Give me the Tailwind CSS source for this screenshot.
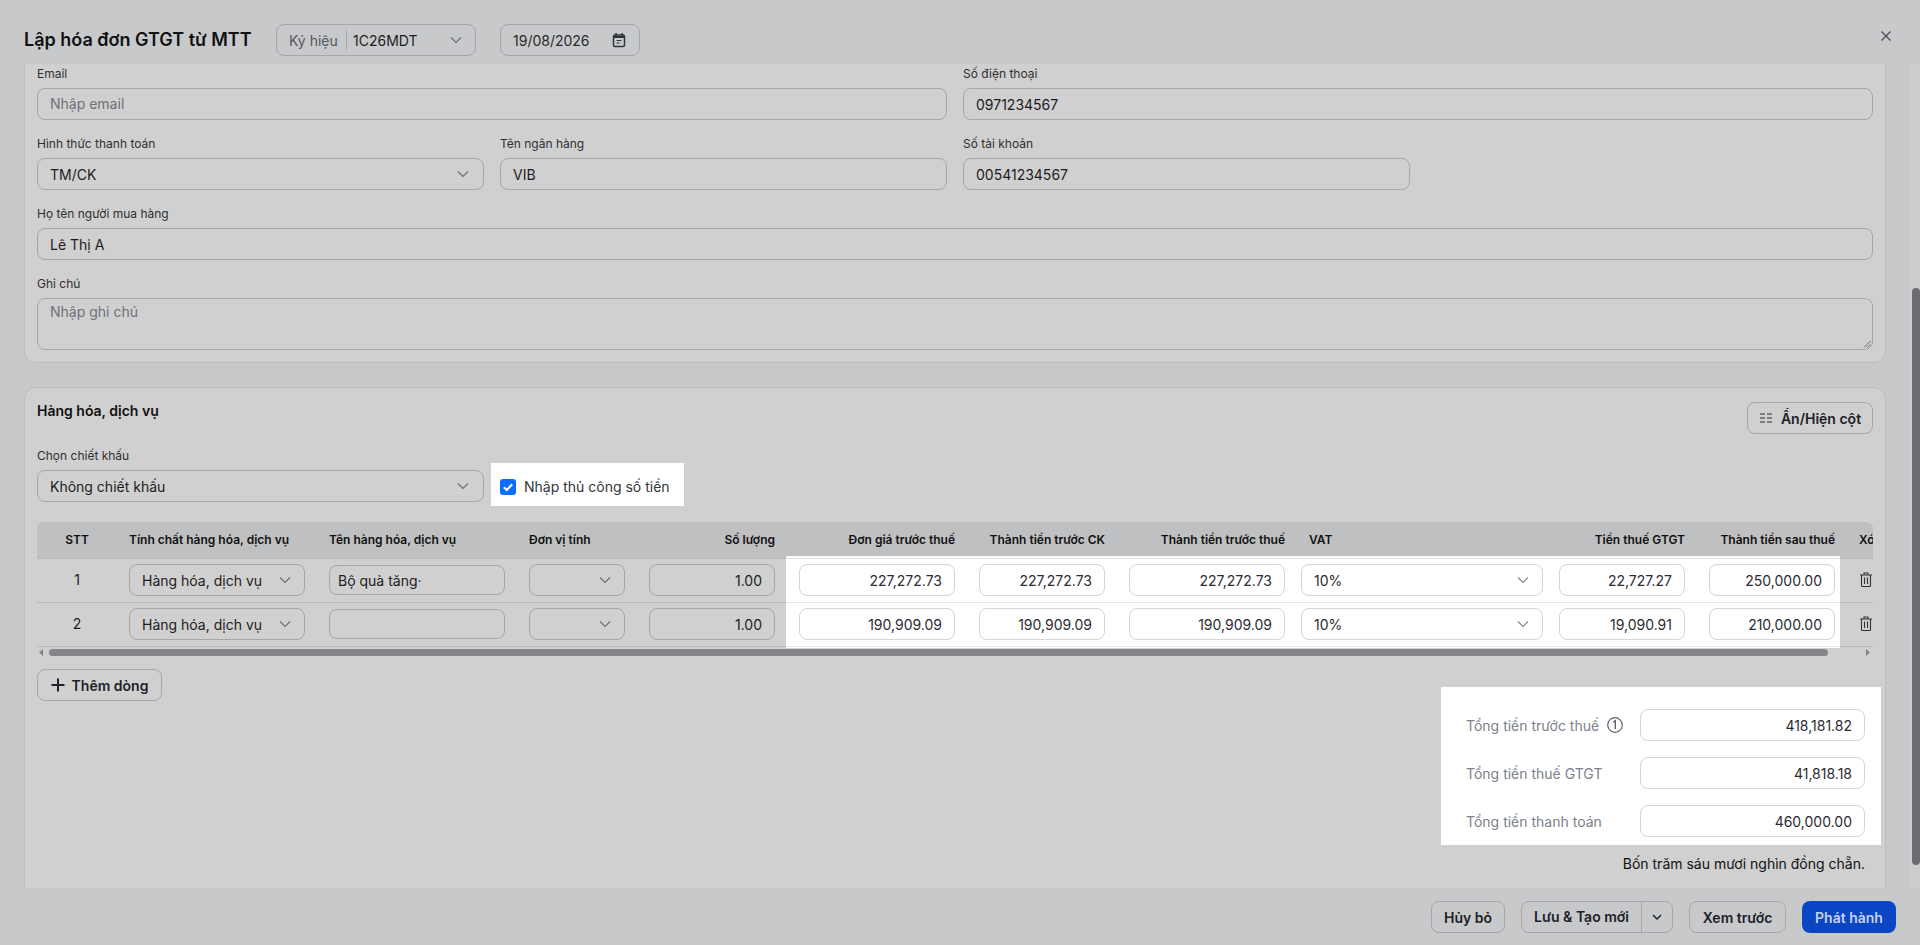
<!DOCTYPE html>
<html lang="vi">
<head>
<meta charset="utf-8">
<title>Lập hóa đơn GTGT từ MTT</title>
<script src="https://cdn.jsdelivr.net/npm/@tailwindcss/browser@4"></script>
</head>
<body class="w-[1920px] h-[945px] overflow-hidden flex flex-col bg-[#c8c9cb] font-['Inter',sans-serif] text-[14px] text-[#1c1c1e]">

<!-- header -->
<header class="h-16 shrink-0 flex items-start pt-6 pl-6 pr-[28px]">
  <h1 class="text-[18px] leading-8 font-semibold text-[#111] w-[228px] whitespace-nowrap">Lập hóa đơn GTGT từ MTT</h1>
  <div class="ml-6 w-[200px] h-8 rounded-lg border border-[#a6a7ab] flex items-center pl-3 pr-[13px]">
    <span class="text-[#55585e] w-[57px] whitespace-nowrap">Ký hiệu</span>
    <span class="w-px h-[20px] bg-[#a6a7ab] mr-[6px]"></span>
    <span class="flex-1">1C26MDT</span>
    <svg class="w-3 h-3" viewBox="0 0 12 12" fill="none" stroke="#6b6f78" stroke-width="1.2"><path d="M1 3.5 6 8.5 11 3.5"/></svg>
  </div>
  <div class="ml-6 w-[140px] h-8 rounded-lg border border-[#a6a7ab] flex items-center justify-between pl-3 pr-3">
    <span class="text-[#2a2a2c]">19/08/2026</span>
    <svg class="w-4 h-4" viewBox="0 0 16 16" fill="none" stroke="#2d3440" stroke-width="1.5"><rect x="2.5" y="3" width="11" height="11.5" rx="1.5"/><path d="M5 1v3M11 1v3" /><path d="M2.5 5h11" stroke-width="2"/><path d="M5.5 8.5h5M5.5 11h3" stroke-width="1.2"/></svg>
  </div>
  <svg class="ml-auto mt-[6px] w-3 h-3" viewBox="0 0 12 12" fill="none" stroke="#4a4d54" stroke-width="1.3"><path d="M1.5 1.5 10.5 10.5M10.5 1.5 1.5 10.5"/></svg>
</header>

<!-- body -->
<div class="flex-1 min-h-0 flex">
  <main class="w-[1910px] overflow-hidden pl-6">
    <!-- customer card, scrolled -->
    <section class="w-[1862px] bg-[#d0d0d0] border-x border-b border-[#bcbdbf] rounded-b-xl px-3 pt-[2px] pb-3">
      <div class="grid grid-cols-4 gap-x-4 gap-y-4">
        <div class="col-span-2">
          <p class="text-[12px] leading-4 mb-[6px] text-[#2f2f31]">Email</p>
          <div class="h-8 rounded-lg border border-[#a6a7ab] flex items-center px-3 pb-[2px] text-[#6d717a]">Nhập email</div>
        </div>
        <div class="col-span-2">
          <p class="text-[12px] leading-4 mb-[6px] text-[#2f2f31]">Số điện thoại</p>
          <div class="h-8 rounded-lg border border-[#a6a7ab] flex items-center px-3">0971234567</div>
        </div>
        <div>
          <p class="text-[12px] leading-4 mb-[6px] text-[#2f2f31]">Hình thức thanh toán</p>
          <div class="h-8 rounded-lg border border-[#a6a7ab] flex items-center justify-between pl-3 pr-[14px]">TM/CK
            <svg class="w-3 h-3" viewBox="0 0 12 12" fill="none" stroke="#6b6f78" stroke-width="1.2"><path d="M1 3.5 6 8.5 11 3.5"/></svg>
          </div>
        </div>
        <div>
          <p class="text-[12px] leading-4 mb-[6px] text-[#2f2f31]">Tên ngân hàng</p>
          <div class="h-8 rounded-lg border border-[#a6a7ab] flex items-center px-3">VIB</div>
        </div>
        <div class="col-span-2">
          <p class="text-[12px] leading-4 mb-[6px] text-[#2f2f31]">Số tài khoản</p>
          <div class="w-[447px] h-8 rounded-lg border border-[#a6a7ab] flex items-center px-3">00541234567</div>
        </div>
        <div class="col-span-4">
          <p class="text-[12px] leading-4 mb-[6px] text-[#2f2f31]">Họ tên người mua hàng</p>
          <div class="h-8 rounded-lg border border-[#a6a7ab] flex items-center px-3">Lê Thị A</div>
        </div>
        <div class="col-span-4">
          <p class="text-[12px] leading-4 mb-[6px] text-[#2f2f31]">Ghi chú</p>
          <div class="relative h-[52px] rounded-lg border border-[#a6a7ab] px-3 pt-[3px] leading-5 text-[#6d717a]">Nhập ghi chú
            <svg class="absolute right-[1px] bottom-[1px] w-2 h-2" viewBox="0 0 8 8" fill="none" stroke="#55585e" stroke-width="0.9"><path d="M7.5 1 1 7.5M7.5 4.5 4.5 7.5"/></svg>
          </div>
        </div>
      </div>
    </section>

    <!-- goods card -->
    <section class="mt-6 w-[1862px] h-[540px] bg-[#d0d0d0] border border-[#bcbdbf] rounded-xl px-3">
      <div class="flex justify-between items-start pt-[14px] h-[60px]">
        <h2 class="-mt-px font-semibold leading-5 text-[#111]">Hàng hóa, dịch vụ</h2>
        <div class="w-[126px] h-8 rounded-lg border border-[#a6a7ab] flex items-center justify-center gap-2 font-semibold text-[#1d2129]">
          <svg class="w-[14px] h-[14px]" viewBox="0 0 14 14" fill="none" stroke="#2a2e35" stroke-width="1"><path d="M1 3h5M8 3h5M1 7h5M8 7h5M1 11h5M8 11h5"/></svg>
          Ẩn/Hiện cột
        </div>
      </div>

      <p class="text-[12px] leading-4 mb-[6px] text-[#2f2f31]">Chọn chiết khấu</p>
      <div class="grid grid-cols-4 gap-x-4">
        <div class="h-8 rounded-lg border border-[#a6a7ab] flex items-center justify-between pl-3 pr-[14px]">Không chiết khấu
          <svg class="w-3 h-3" viewBox="0 0 12 12" fill="none" stroke="#6b6f78" stroke-width="1.2"><path d="M1 3.5 6 8.5 11 3.5"/></svg>
        </div>
        <div class="relative h-8 flex items-center gap-2">
          <div class="absolute -top-[7px] -bottom-[4px] -left-[9px] w-[193px] bg-white"></div>
          <svg class="relative w-4 h-4 mt-[1px]" viewBox="0 0 16 16"><rect width="16" height="16" rx="3" fill="#0d6efd"/><path d="M3.8 8.2 6.8 11 12.2 5.2" fill="none" stroke="#fff" stroke-width="2"/></svg>
          <span class="relative text-[#33363c]">Nhập thủ công số tiền</span>
        </div>
      </div>

      <!-- table -->
      <div class="relative mt-5 w-[1836px] overflow-hidden">
        <div class="grid grid-cols-[80px_200px_200px_120px_150px_180px_150px_180px_250px_150px_150px_60px] h-9 items-center rounded-t-md bg-[#bfc0c2] text-[12px] font-semibold text-[#111] whitespace-nowrap">
          <div class="text-center">STT</div>
          <div class="px-3">Tính chất hàng hóa, dịch vụ</div>
          <div class="px-3">Tên hàng hóa, dịch vụ</div>
          <div class="px-3">Đơn vị tính</div>
          <div class="px-3 text-right">Số lượng</div>
          <div class="px-3 text-right">Đơn giá trước thuế</div>
          <div class="px-3 text-right">Thành tiền trước CK</div>
          <div class="px-3 text-right">Thành tiền trước thuế</div>
          <div class="pl-3">VAT</div>
          <div class="px-3 text-right">Tiền thuế GTGT</div>
          <div class="px-3 text-right">Thành tiền sau thuế</div>
          <div class="px-3">Xóa</div>
        </div>

        <div class="absolute left-[749px] top-[34px] w-[1054px] h-[92px] bg-white"></div>

        <div class="relative border-t border-black/10">
          <!-- row 1 -->
          <div class="grid grid-cols-[80px_200px_200px_120px_150px_180px_150px_180px_250px_150px_150px_60px] h-11 pt-[5px] border-b border-black/10 items-start">
            <div class="text-center leading-8">1</div>
            <div class="pl-3 pr-3"><div class="h-8 rounded-lg border border-[#a6a7ab] flex items-center justify-between pl-3 pr-[13px] whitespace-nowrap">Hàng hóa, dịch vụ
              <svg class="w-3 h-3 shrink-0" viewBox="0 0 12 12" fill="none" stroke="#6b6f78" stroke-width="1.2"><path d="M1 3.5 6 8.5 11 3.5"/></svg></div></div>
            <div class="px-3"><div class="mt-px h-[30px] rounded-lg border border-[#a6a7ab] flex items-center px-2">Bộ quà tăng·</div></div>
            <div class="px-3"><div class="h-8 rounded-lg border border-[#a6a7ab] flex items-center justify-end pr-[13px]">
              <svg class="w-3 h-3" viewBox="0 0 12 12" fill="none" stroke="#6b6f78" stroke-width="1.2"><path d="M1 3.5 6 8.5 11 3.5"/></svg></div></div>
            <div class="px-3"><div class="h-8 rounded-lg border border-[#a6a7ab] flex items-center justify-end pr-3">1.00</div></div>
            <div class="px-3"><div class="h-8 rounded-lg border border-[#d3d5dd] bg-white flex items-center justify-end pr-3 text-[#2b2b33]">227,272.73</div></div>
            <div class="px-3"><div class="h-8 rounded-lg border border-[#d3d5dd] bg-white flex items-center justify-end pr-3 text-[#2b2b33]">227,272.73</div></div>
            <div class="px-3"><div class="h-8 rounded-lg border border-[#d3d5dd] bg-white flex items-center justify-end pr-3 text-[#2b2b33]">227,272.73</div></div>
            <div class="px-1"><div class="h-8 rounded-lg border border-[#d3d5dd] bg-white flex items-center justify-between pl-3 pr-[13px] text-[#2b2b33]">10%
              <svg class="w-3 h-3" viewBox="0 0 12 12" fill="none" stroke="#7f8591" stroke-width="1.2"><path d="M1 3.5 6 8.5 11 3.5"/></svg></div></div>
            <div class="px-3"><div class="h-8 rounded-lg border border-[#d3d5dd] bg-white flex items-center justify-end pr-3 text-[#2b2b33]">22,727.27</div></div>
            <div class="px-3"><div class="h-8 rounded-lg border border-[#d3d5dd] bg-white flex items-center justify-end pr-3 text-[#2b2b33]">250,000.00</div></div>
            <div class="pl-[13px] pt-[8px]"><svg class="w-3 h-[15px]" viewBox="0 0 12 15" fill="none" stroke="#333" stroke-width="1.1"><path d="M0 3h12M4 3V1h4v2M1.5 3v10.5a1 1 0 0 0 1 1h7a1 1 0 0 0 1-1V3M4.5 5.5v6.5M7.500 5.500v6.500"/></svg></div>
          </div>
          <!-- row 2 -->
          <div class="grid grid-cols-[80px_200px_200px_120px_150px_180px_150px_180px_250px_150px_150px_60px] h-11 pt-[5px] border-b border-black/10 items-start">
            <div class="text-center leading-8">2</div>
            <div class="px-3"><div class="h-8 rounded-lg border border-[#a6a7ab] flex items-center justify-between pl-3 pr-[13px] whitespace-nowrap">Hàng hóa, dịch vụ
              <svg class="w-3 h-3 shrink-0" viewBox="0 0 12 12" fill="none" stroke="#6b6f78" stroke-width="1.2"><path d="M1 3.5 6 8.5 11 3.5"/></svg></div></div>
            <div class="px-3"><div class="mt-px h-[30px] rounded-lg border border-[#a6a7ab]"></div></div>
            <div class="px-3"><div class="h-8 rounded-lg border border-[#a6a7ab] flex items-center justify-end pr-[13px]">
              <svg class="w-3 h-3" viewBox="0 0 12 12" fill="none" stroke="#6b6f78" stroke-width="1.2"><path d="M1 3.5 6 8.5 11 3.5"/></svg></div></div>
            <div class="px-3"><div class="h-8 rounded-lg border border-[#a6a7ab] flex items-center justify-end pr-3">1.00</div></div>
            <div class="px-3"><div class="h-8 rounded-lg border border-[#d3d5dd] bg-white flex items-center justify-end pr-3 text-[#2b2b33]">190,909.09</div></div>
            <div class="px-3"><div class="h-8 rounded-lg border border-[#d3d5dd] bg-white flex items-center justify-end pr-3 text-[#2b2b33]">190,909.09</div></div>
            <div class="px-3"><div class="h-8 rounded-lg border border-[#d3d5dd] bg-white flex items-center justify-end pr-3 text-[#2b2b33]">190,909.09</div></div>
            <div class="px-1"><div class="h-8 rounded-lg border border-[#d3d5dd] bg-white flex items-center justify-between pl-3 pr-[13px] text-[#2b2b33]">10%
              <svg class="w-3 h-3" viewBox="0 0 12 12" fill="none" stroke="#7f8591" stroke-width="1.2"><path d="M1 3.5 6 8.5 11 3.5"/></svg></div></div>
            <div class="px-3"><div class="h-8 rounded-lg border border-[#d3d5dd] bg-white flex items-center justify-end pr-3 text-[#2b2b33]">19,090.91</div></div>
            <div class="px-3"><div class="h-8 rounded-lg border border-[#d3d5dd] bg-white flex items-center justify-end pr-3 text-[#2b2b33]">210,000.00</div></div>
            <div class="pl-[13px] pt-[8px]"><svg class="w-3 h-[15px]" viewBox="0 0 12 15" fill="none" stroke="#333" stroke-width="1.1"><path d="M0 3h12M4 3V1h4v2M1.5 3v10.5a1 1 0 0 0 1 1h7a1 1 0 0 0 1-1V3M4.5 5.5v6.5M7.500 5.500v6.500"/></svg></div>
          </div>
        </div>

        <!-- table scrollbar -->
        <div class="relative h-[9px] mt-[1px] flex items-center">
          <svg class="ml-[2px] w-[4px] h-[7px]" viewBox="0 0 4 7" fill="#84858a"><path d="M4 0v7L0 3.500z"/></svg>
          <div class="ml-[6px] w-[1779px] h-[7px] rounded-full bg-[#84858a]"></div>
          <svg class="ml-auto mr-[3px] w-[4px] h-[7px]" viewBox="0 0 4 7" fill="#84858a"><path d="M0 0v7l4-3.500z"/></svg>
        </div>
      </div>

      <div class="mt-3 w-[125px] h-8 rounded-lg border border-[#a6a7ab] flex items-center justify-center gap-[7px] font-semibold text-[#1d2129]">
        <svg class="w-[14px] h-[14px]" viewBox="0 0 14 14" fill="none" stroke="#1d2129" stroke-width="2"><path d="M7 0.500v13M0.500 7h13"/></svg>
        Thêm dòng
      </div>

      <!-- totals -->
      <div class="flex flex-col items-end pr-2 mt-2">
        <div class="relative w-[399px] flex flex-col gap-4">
          <div class="absolute -left-[25px] -right-[16px] -top-[22px] -bottom-[8px] bg-white"></div>
          <div class="relative flex items-center justify-between">
            <span class="flex items-center gap-[8px] text-[#7b818d]">Tổng tiền trước thuế
              <svg class="w-4 h-4" viewBox="0 0 16 16" fill="none" stroke="#5b616d" stroke-width="1.2"><circle cx="8" cy="8" r="7.300"/><path d="M6.300 5.200 8.300 3.900v8.200" stroke-width="1.400"/></svg>
            </span>
            <div class="w-[225px] h-8 rounded-lg border border-[#d3d5dd] bg-white flex items-center justify-end pr-3 text-[#2b2b33]">418,181.82</div>
          </div>
          <div class="relative flex items-center justify-between">
            <span class="text-[#7b818d]">Tổng tiền thuế GTGT</span>
            <div class="w-[225px] h-8 rounded-lg border border-[#d3d5dd] bg-white flex items-center justify-end pr-3 text-[#2b2b33]">41,818.18</div>
          </div>
          <div class="relative flex items-center justify-between">
            <span class="text-[#7b818d]">Tổng tiền thanh toán</span>
            <div class="w-[225px] h-8 rounded-lg border border-[#d3d5dd] bg-white flex items-center justify-end pr-3 text-[#2b2b33]">460,000.00</div>
          </div>
        </div>
        <p class="mt-[17px] leading-5 text-[#111]">Bốn trăm sáu mươi nghìn đồng chẵn.</p>
      </div>
    </section>
  </main>

  <!-- page scrollbar -->
  <div class="w-[10px] h-[824px] bg-[#cdcdcf] rounded-t-md pl-[2px]">
    <div class="mt-[224px] w-2 h-[577px] rounded-full bg-[#6c6d70]"></div>
  </div>
</div>

<!-- footer -->
<footer class="h-[57px] shrink-0 flex justify-end items-start gap-4 pt-[13px] pr-6 font-semibold text-[#1d2129]">
  <div class="w-[74px] h-8 rounded-lg border border-[#a6a7ab] flex items-center justify-center">Hủy bỏ</div>
  <div class="w-[152px] h-8 rounded-lg border border-[#a6a7ab] flex items-center">
    <span class="w-[120px] text-center border-r border-[#a6a7ab] leading-[30px]">Lưu &amp; Tạo mới</span>
    <svg class="ml-[9px] w-3 h-3" viewBox="0 0 12 12" fill="none" stroke="#1d2129" stroke-width="1.500"><path d="M2 4 6 8 10 4"/></svg>
  </div>
  <div class="w-[97px] h-8 rounded-lg border border-[#a6a7ab] flex items-center justify-center">Xem trước</div>
  <div class="w-[94px] h-8 rounded-lg bg-[#0a45c4] text-[#c4d3f2] flex items-center justify-center">Phát hành</div>
</footer>
</body>
</html>
